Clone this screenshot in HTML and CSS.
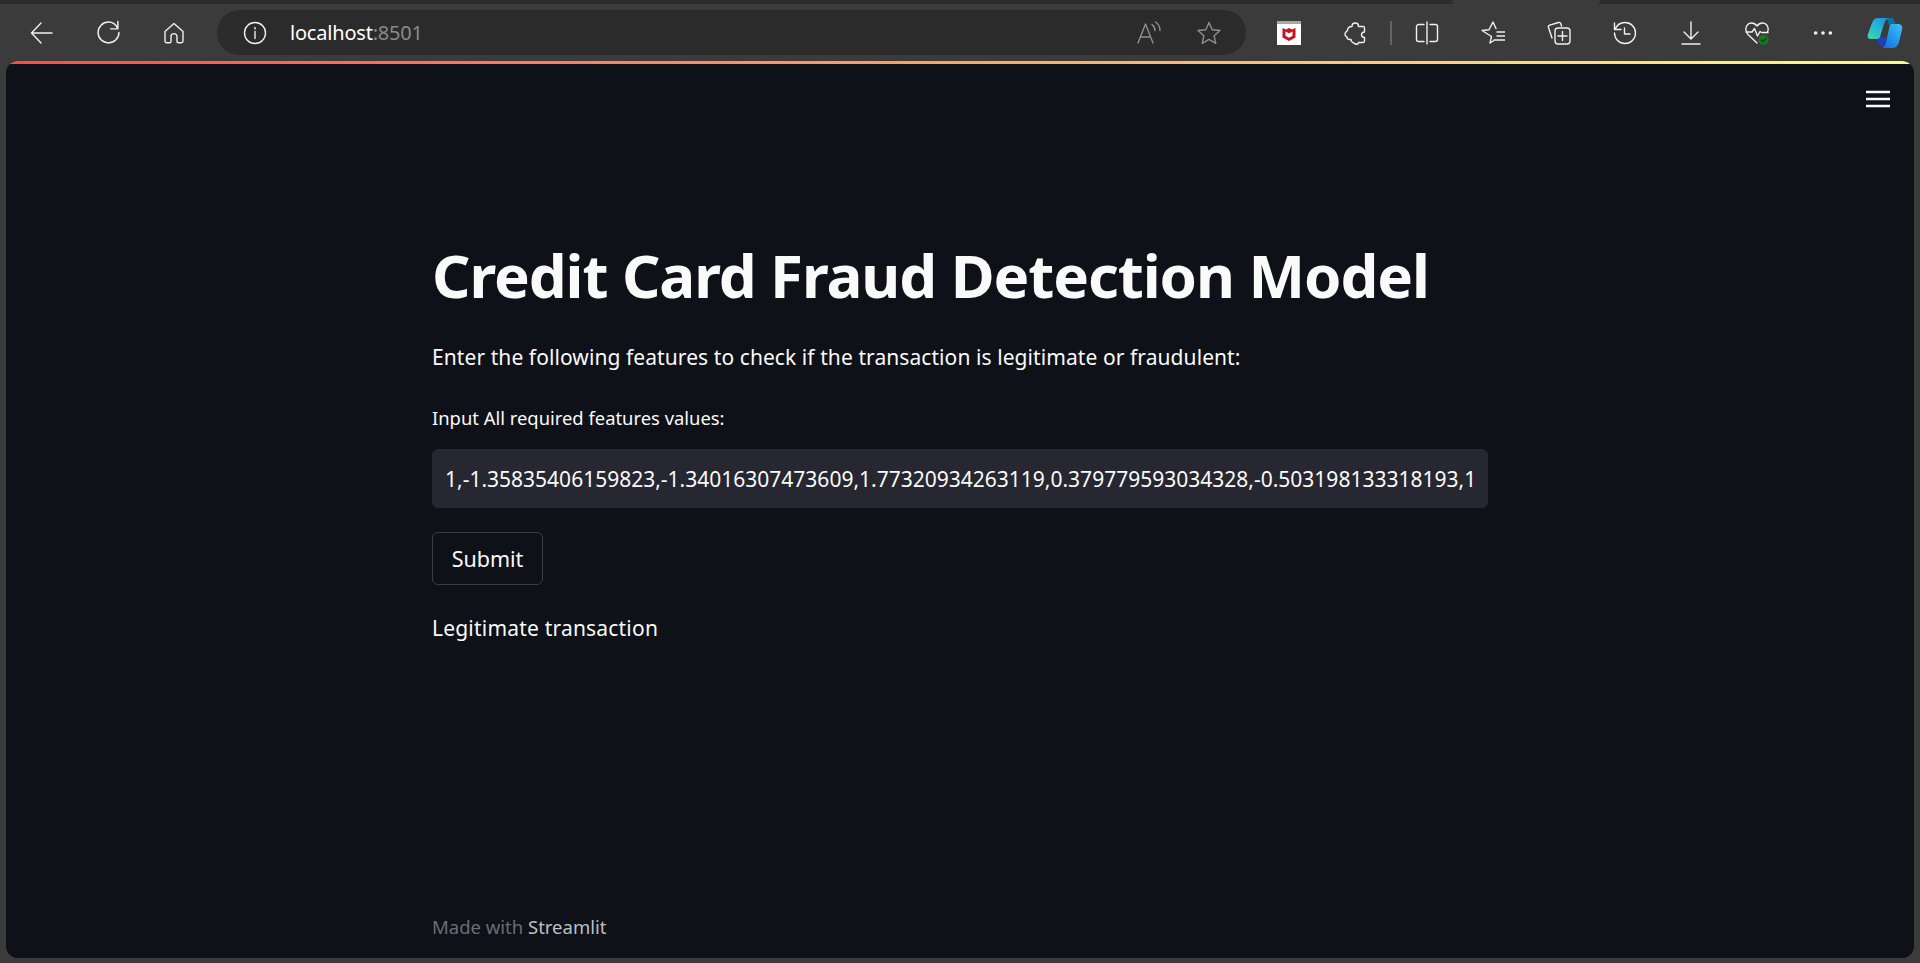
FILE: index.html
```html
<!DOCTYPE html>
<html>
<head>
    <meta charset="utf-8">
    <title>Credit Card Fraud Detection Model</title>
    <link rel="stylesheet" href="styles.css">
</head>
<body>
    <div class="tabstrip"><div class="tab-active"></div></div>
    <div class="toolbar">
        <div class="nav-btn">
            <svg class="icon" viewBox="0 0 24 24"><path d="M1.500 12H22M11 2 1.500 12 11 22"/></svg>
        </div>
        <div class="nav-btn">
            <svg class="icon refresh-icon" viewBox="0 0 24 24"><path d="M21 1.500V8.500H14M20.800 8C19.200 4.500 16 2 12 2 6.400 2 2 6.500 2 12S6.400 22 12 22 22 17.500 22 12"/></svg>
        </div>
        <div class="nav-btn">
            <svg class="icon" viewBox="0 0 24 24"><path d="M3 10.500 12 2.500 21 10.500V20C21 21 20.300 21.700 19.300 21.700H16.300C15.500 21.700 15 21.200 15 20.400V15.500C15 13.800 13.700 12.600 12 12.600S9 13.800 9 15.500V20.400C9 21.200 8.500 21.700 7.700 21.700H4.700C3.700 21.700 3 21 3 20Z"/></svg>
        </div>

        <div class="address-bar">
            <svg class="icon info-icon" viewBox="0 0 24 24"><circle cx="12" cy="12" r="10.500"/><path d="M12 10.500V17.500M12 6.500V8"/></svg>
            <div class="url">localhost<span class="url-port">:8501</span></div>
            <svg class="icon dim read-icon" viewBox="0 0 24 24"><path d="M1 22 8.500 3 16 22M3.500 16H13.500M15 3.500C17 5 18 7 18 9.500M18.500 1C21.500 3 23 6 23 9.500"/></svg>
            <svg class="icon dim star-icon" viewBox="0 0 24 24"><path d="M12 1.500 15.200 8.700 23 9.500 17.100 14.700 18.800 22.400 12 18.400 5.200 22.400 6.900 14.700 1 9.500 8.800 8.700Z"/></svg>
        </div>

        <div class="tool-group">
            <div class="tool-btn">
                <svg class="mcafee" viewBox="0 0 24 24"><rect width="24" height="24" fill="#fff"/><rect width="24" height="3" fill="#a8a8a8"/><path fill="#c8141c" d="M5.500 7 9 8.500 12 7 15 8.500 18.500 7V16.500L12 20 5.500 16.500Z"/><path fill="#fff" d="M8.500 10.500 12 12.200 15.500 10.500V14.800L12 16.800 8.500 14.800Z"/></svg>
            </div>
            <div class="tool-btn">
                <svg class="icon" viewBox="0 0 24 24"><path d="M9 5.500C9 3.500 10.500 2 12.300 2S15.500 3.500 15.500 5.500H20C21 5.500 21.500 6 21.500 7V11C19.500 11 18.500 12.300 18.500 13.800S19.500 16.500 21.500 16.500V20C21.500 21 21 21.500 20 21.500H15.500C15.500 23 14 23.500 12.500 23C11 22.500 10 21.500 8.500 20.500L8 18.500H6.500C4.800 18.500 3.800 17.500 4 16C2 15 1.500 13.500 2.500 11.500L4.500 9.500C4.500 7 6.500 5.500 9 5.500Z"/></svg>
            </div>
            <div class="tool-sep"></div>
            <div class="tool-btn">
                <svg class="icon" viewBox="0 0 24 24"><path d="M12 1V23M9 3.500H3.500C2.500 3.500 1.500 4.500 1.500 5.500V18.500C1.500 19.500 2.500 20.500 3.500 20.500H9M15 3.500H20.500C21.500 3.500 22.500 4.500 22.500 5.500V18.500C22.500 19.500 21.500 20.500 20.500 20.500H15"/></svg>
            </div>
            <div class="tool-btn">
                <svg class="icon" viewBox="0 0 24 24"><path d="M9 22 10.500 15.500 1 9.500 8 8.700 12 1 15 7.500M16 11H24M16 15H24M13 19H24M9 22 13 19.500"/></svg>
            </div>
            <div class="tool-btn">
                <svg class="icon" viewBox="0 0 24 24"><path d="M5 17 1.500 6.500C1.200 5.500 1.700 4.500 2.700 4.200L11.500 1.500C12.500 1.200 13.500 1.700 13.800 2.700L14.500 5"/><rect x="8" y="7" width="15" height="16" rx="3"/><path d="M15.500 10.500V19.500M11 15H20"/></svg>
            </div>
            <div class="tool-btn">
                <svg class="icon" viewBox="0 0 24 24"><path d="M1.500 2V8.500H8M2 8.500C3.500 4.800 7.300 1.500 12 1.500 17.800 1.500 22.500 6.200 22.500 12S17.800 22.500 12 22.500 1.500 17.800 1.500 12M11.500 7V13H17"/></svg>
            </div>
            <div class="tool-btn">
                <svg class="icon" viewBox="0 0 24 24"><path d="M12 1V18M5 11 12 18 19 11M3 23H21"/></svg>
            </div>
            <div class="tool-btn">
                <svg class="icon" viewBox="0 0 24 24"><path d="M1 11H7L9.500 7.500 12.500 15 15 10.500 16.500 11.500H23M12 22 3 13.500C1 11.500 .8 9.500 .8 8 .8 4.500 3.500 2 6.500 2 8.500 2 10.500 3 12 5 13.500 3 15.500 2 17.500 2 20.500 2 23.200 4.500 23.200 8 23.200 9 23 10 22.500 11"/><circle class="heart-badge" cx="18.500" cy="19" r="5"/><path class="heart-check" d="M16.300 19 18 20.700 20.800 17.500"/></svg>
            </div>
            <div class="tool-btn">
                <svg class="more-icon" viewBox="0 0 24 24"><circle cx="4" cy="12" r="2"/><circle cx="12" cy="12" r="2"/><circle cx="20" cy="12" r="2"/></svg>
            </div>
            <div class="copilot-btn">
                <svg class="copilot" viewBox="0 0 36 32">
                    <defs>
                        <linearGradient id="cop-a" x1="0" y1="1" x2="1" y2="0"><stop offset="0" stop-color="#3fd9a0"/><stop offset=".5" stop-color="#27b6d8"/><stop offset="1" stop-color="#1e88e0"/></linearGradient>
                        <linearGradient id="cop-b" x1="0" y1="1" x2="1" y2="0"><stop offset="0" stop-color="#2060e0"/><stop offset=".5" stop-color="#2098f0"/><stop offset="1" stop-color="#40c0f0"/></linearGradient>
                    </defs>
                    <path fill="#0f6f9e" d="M20 1H26L29 8H22Z"/>
                    <path fill="#1c3fc8" d="M9 20H20L16 30C14 29 12 27 11 25Z"/>
                    <path fill="url(#cop-a)" d="M11 1H22C19 2 18 4 17 7L13 20C12.500 22 10 22 7 22H4C1 22 0 20 1 17L5 6C6 3 8 1 11 1Z"/>
                    <path fill="url(#cop-b)" d="M24 7H31C34 7 36 9 35 13L32 25C31 29 28 31 25 31H14C17 31 18 28 19 25L22 12C22.500 9 23 8 24 7Z"/>
                </svg>
            </div>
        </div>
    </div>

    <div class="app">
        <div class="deco-line"></div>
        <svg class="menu-icon" viewBox="0 0 24 18"><path d="M0 2H24M0 9H24M0 16H24"/></svg>
        <div class="main-block">
            <h1 class="page-title">Credit Card Fraud Detection Model</h1>
            <p class="intro">Enter the following features to check if the transaction is legitimate or fraudulent:</p>
            <label class="field-label">Input All required features values:</label>
            <div class="text-input"><div class="text-value">1,-1.35835406159823,-1.34016307473609,1.77320934263119,0.379779593034328,-0.503198133318193,1</div></div>
            <button class="submit-btn">Submit</button>
            <p class="result">Legitimate transaction</p>
            <div class="footer">Made with <span class="footer-brand">Streamlit</span></div>
        </div>
    </div>
</body>
</html>
```

FILE: styles.css
```css
* { box-sizing: border-box; }
html, body { height: 100%; }
body {
  margin: 0;
  height: 963px;
  overflow: hidden;
  background: #3b3b3b;
  display: flex;
  flex-direction: column;
  font-family: "Noto Sans", sans-serif;
}

/* browser chrome */
.tabstrip { height: 4px; background: #2b2b2b; flex: none; padding-left: 1452px; }
.tab-active { width: 148px; height: 100%; background: #3b3b3b; border-radius: 0 0 6px 6px; }
.toolbar { height: 57px; flex: none; display: flex; align-items: flex-start; padding: 6px 0 0 9px; }
.nav-btn { width: 66px; height: 45px; flex: none; display: flex; align-items: center; justify-content: center; }
.icon { width: 24px; height: 24px; fill: none; stroke: #f0f0f0; stroke-width: 1.4; stroke-linejoin: round; stroke-linecap: round; flex: none; }
.icon.dim { stroke: #8f8f8f; }
.refresh-icon { width: 25px; height: 25px; }
.address-bar {
  width: 1029px;
  height: 45px;
  margin-left: 10px;
  flex: none;
  border-radius: 23px;
  background: #2b2b2b;
  display: flex;
  align-items: center;
  padding-left: 26px;
}
.info-icon { width: 24px; height: 24px; }
.url { margin-left: 23px; font-size: 20px; color: #fff; letter-spacing: -0.2px; width: 847px; flex: none; }
.url-port { color: #8a8a8a; }
.star-icon { margin-left: 36px; }
.tool-group { flex: none; display: flex; align-items: center; height: 45px; margin-left: 10px; }
.tool-btn { width: 66px; height: 45px; flex: none; display: flex; align-items: center; justify-content: center; }
.tool-sep { width: 2px; height: 24px; background: #646464; margin: 0 2px; flex: none; }
.mcafee { width: 24px; height: 24px; }
.heart-badge { fill: #157a1c; stroke: none; }
.heart-check { stroke: #0c3d10; stroke-width: 1.2; }
.more-icon { width: 22px; height: 22px; fill: #f0f0f0; }
.copilot-btn { width: 50px; height: 45px; display: flex; align-items: center; justify-content: center; flex: none; margin-left: 4px; }
.copilot { width: 36px; height: 32px; }

/* streamlit app */
.app {
  position: relative;
  flex: none;
  width: 1908px;
  height: 897px;
  margin-left: 6px;
  background: #0e1117;
  border-radius: 12px;
  overflow: hidden;
  color: #fafafa;
}
.deco-line { height: 3px; background: linear-gradient(90deg, #ff4b4b, #fffd80); }
.menu-icon { position: absolute; top: 29px; right: 24px; width: 24px; height: 18px; fill: none; stroke: #fafafa; stroke-width: 2.4; }
.main-block {
  width: 1056px;
  height: 894px;
  margin-left: 426px;
  display: flex;
  flex-direction: column;
  align-items: flex-start;
}
.page-title { margin: 176px 0 0; font-size: 60px; line-height: 70px; font-weight: 700; letter-spacing: -1.08px; white-space: nowrap; }
.intro { margin: 31px 0 0; font-size: 21px; line-height: 32px; letter-spacing: 0.08px; white-space: nowrap; }
.field-label { margin-top: 31px; font-size: 18.400px; line-height: 28px; white-space: nowrap; }
.text-input { margin-top: 17px; width: 100%; height: 59px; padding: 0 13px; border-radius: 6px; background: #262730; display: flex; align-items: center; }
.text-value { font-size: 21px; line-height: 28px; white-space: nowrap; overflow: hidden; }
.submit-btn {
  margin-top: 24px;
  width: 111px;
  height: 53px;
  padding: 0;
  background: #0e1117;
  border: 1px solid #3c3e46;
  border-radius: 6px;
  color: #fafafa;
  font-family: inherit;
  font-size: 21.500px;
}
.result { margin: 27px 0 0; font-size: 21px; line-height: 32px; letter-spacing: 0.2px; white-space: nowrap; }
.footer { margin-top: auto; margin-bottom: 17px; font-size: 18.500px; line-height: 28px; color: #6b6d73; }
.footer-brand { color: #bdbfc2; }
```
